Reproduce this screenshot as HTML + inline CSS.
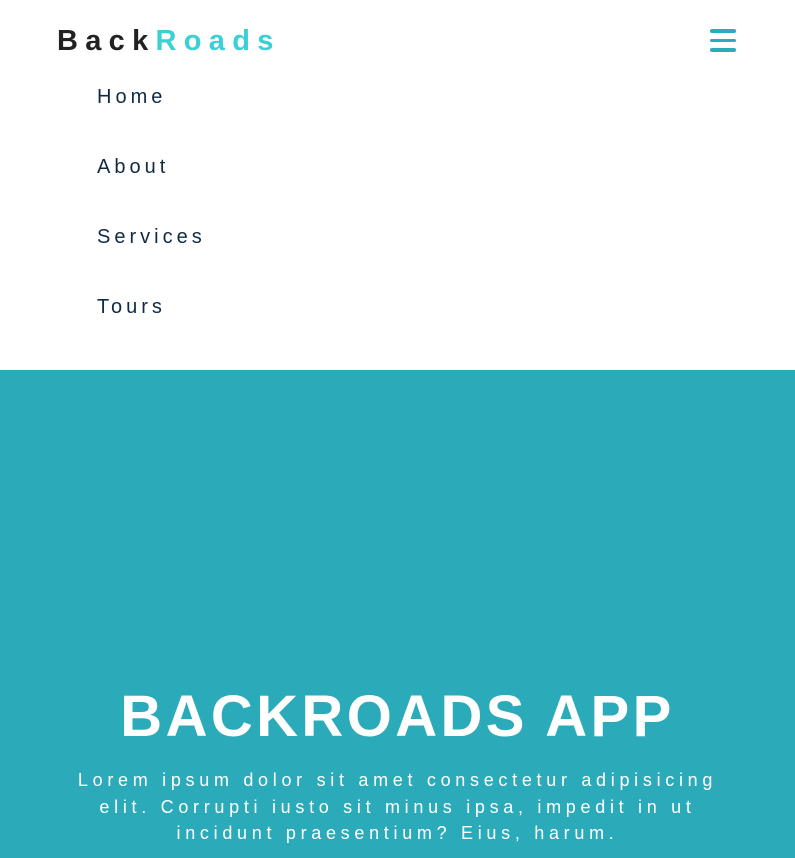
<!DOCTYPE html>
<html><head><style>
*{margin:0;padding:0;box-sizing:border-box}
body{width:795px;height:858px;overflow:hidden;background:#fff;font-family:"Liberation Sans",sans-serif}
.logo{position:absolute;left:57px;top:25px;font-size:29px;font-weight:bold;letter-spacing:7.3px;color:#222}
.logo span{color:#3bcfd6}
.ham{position:absolute;left:710px;top:29px;width:26px}
.ham div{height:3.5px;background:#2cacb9;border-radius:2px;margin-bottom:6px}
.nav{position:absolute;left:97px;font-size:20px;letter-spacing:4px;color:#102a42}
.hero{position:absolute;left:0;top:370px;width:795px;height:488px;background:#2babba;color:#fff;text-align:center}
h1{position:absolute;top:313px;width:100%;font-size:58px;letter-spacing:3.4px;font-weight:bold}
p{position:absolute;top:397px;left:0;width:795px;font-size:18px;letter-spacing:4.7px;line-height:26.5px;white-space:nowrap}
</style></head><body>
<div class="logo">Back<span>Roads</span></div>
<div class="ham"><div></div><div></div><div></div></div>
<div class="nav" style="top:86px">Home</div>
<div class="nav" style="top:156px">About</div>
<div class="nav" style="top:226px">Services</div>
<div class="nav" style="top:296px">Tours</div>
<div class="hero">
<h1>BACKROADS APP</h1>
<p>Lorem ipsum dolor sit amet consectetur adipisicing<br>elit. Corrupti iusto sit minus ipsa, impedit in ut<br>incidunt praesentium? Eius, harum.</p>
</div>
</body></html>
